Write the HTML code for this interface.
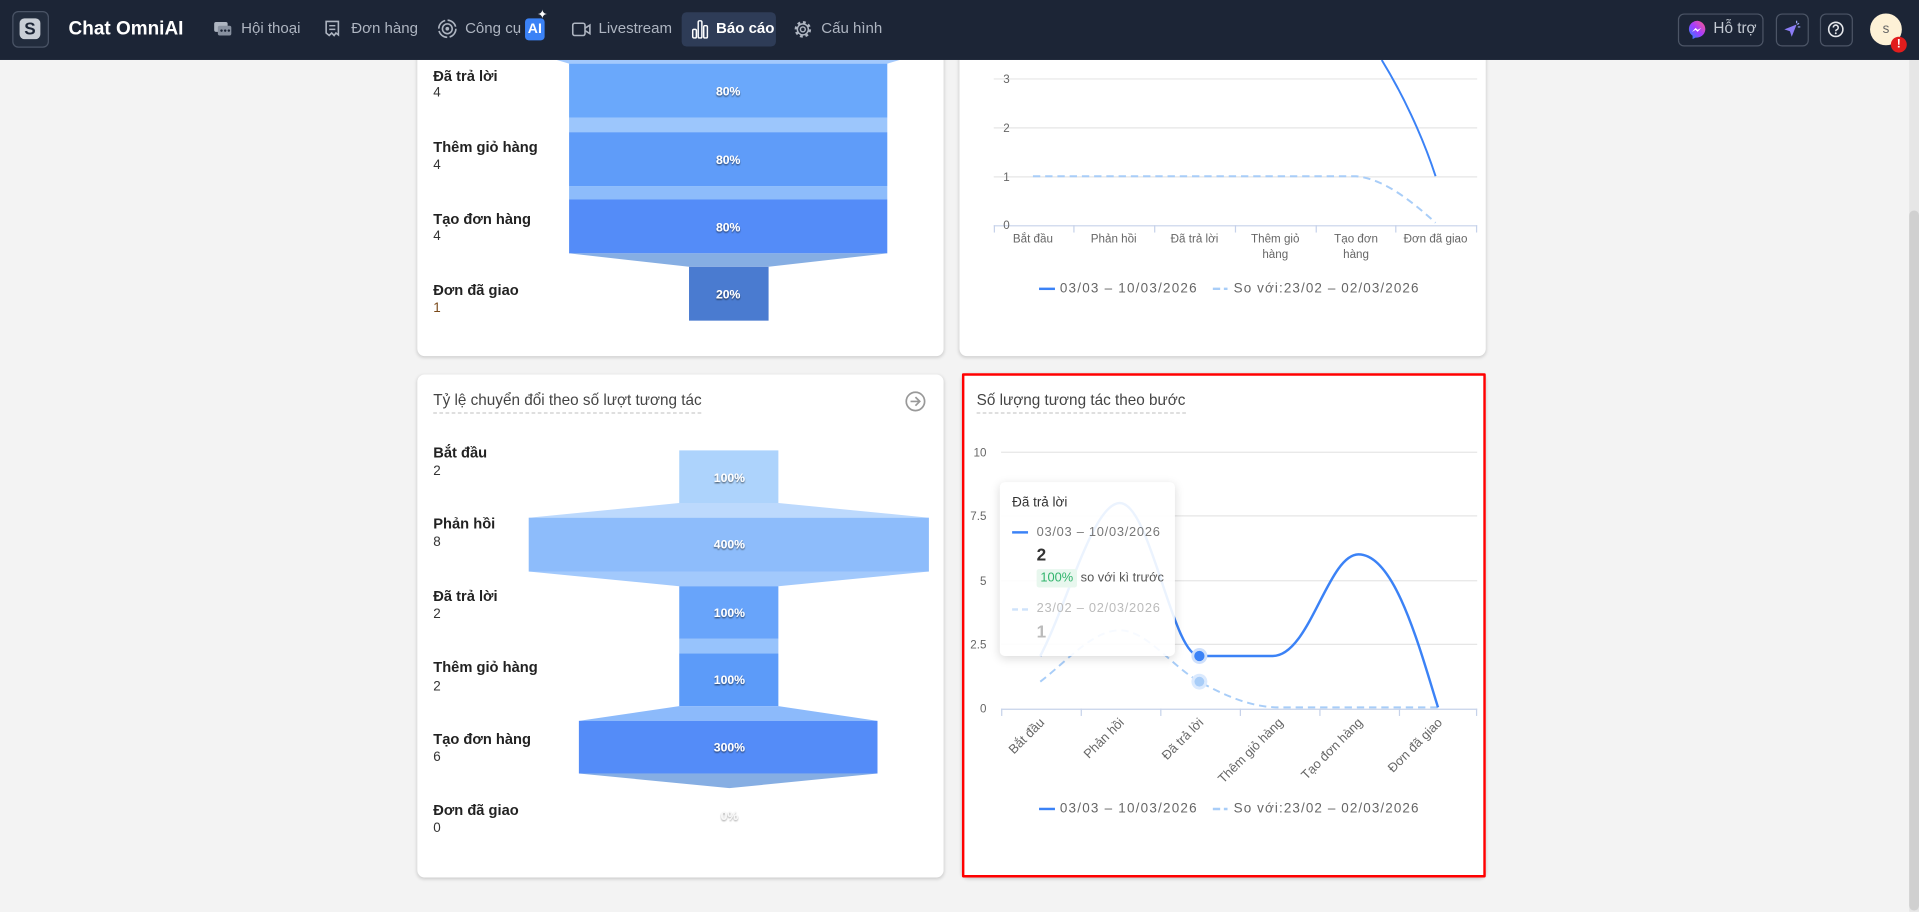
<!DOCTYPE html>
<html><head><meta charset="utf-8">
<style>
html,body{margin:0;padding:0;width:1919px;height:911px;overflow:hidden;background:#f3f3f3;}
#w{position:absolute;left:0;top:0;width:1568px;height:745px;transform:scale(1.22385);transform-origin:0 0;font-family:"Liberation Sans","DejaVu Sans",sans-serif;}
.hdr{position:absolute;left:0;top:0;width:1568px;height:49px;background:#1c2536;z-index:10;}
.nav{position:absolute;top:16px;font-size:12.3px;color:#aeb5c1;white-space:nowrap;}
.card{position:absolute;background:#fff;border-radius:6px;box-shadow:0 1px 3px rgba(0,0,0,.18);}
.lbl{position:absolute;font-size:12px;color:#222;font-weight:bold;}
.num{position:absolute;font-size:11px;color:#333;}
.ttl{position:absolute;font-size:12.5px;color:#444;border-bottom:1px dashed #ccc;padding-bottom:3px;}
</style></head><body>
<div id="w">
<div class="hdr">
  <div style="position:absolute;left:10px;top:9px;width:28px;height:28px;border:1px solid #4a5466;border-radius:5px;background:#222c3d;"></div>
  <div style="position:absolute;left:16px;top:15px;width:17px;height:17px;border-radius:4px;background:#c9ced6;color:#1c2536;font:bold 14px 'Liberation Sans';text-align:center;line-height:17px;">S</div>
  <div style="position:absolute;left:56px;top:15px;font-size:15.5px;font-weight:bold;color:#fff;">Chat OmniAI</div>
  <svg style="position:absolute;left:174px;top:17px" width="16" height="14" viewBox="0 0 16 14"><rect x="1" y="1" width="11" height="8" rx="1.5" fill="#aeb5c1"/><rect x="4" y="4" width="11" height="8" rx="1.5" fill="#8891a0"/><circle cx="7" cy="8" r="1" fill="#1c2536"/><circle cx="10" cy="8" r="1" fill="#1c2536"/><circle cx="13" cy="8" r="1" fill="#1c2536"/></svg>
  <div class="nav" style="left:197px">Hội thoại</div>
  <svg style="position:absolute;left:265px;top:16px" width="13" height="16" viewBox="0 0 13 16"><path d="M1.5 1.5h10v11l-2-1.5-1.5 2-2-2-2 2-2.5-2z" fill="none" stroke="#aeb5c1" stroke-width="1.3"/><path d="M4 5h5M4 8h5" stroke="#aeb5c1" stroke-width="1.2"/></svg>
  <div class="nav" style="left:287px">Đơn hàng</div>
  <svg style="position:absolute;left:357px;top:15px" width="17" height="17" viewBox="0 0 17 17"><circle cx="8.5" cy="8.5" r="7" fill="none" stroke="#aeb5c1" stroke-width="1.3" stroke-dasharray="9 2"/><circle cx="8.5" cy="8.5" r="4" fill="none" stroke="#aeb5c1" stroke-width="1.3"/><circle cx="8.5" cy="8.5" r="1.5" fill="#aeb5c1"/></svg>
  <div class="nav" style="left:380px">Công cụ</div>
  <div style="position:absolute;left:429px;top:15px;width:16px;height:18px;border-radius:3px;background:#3b82f6;color:#fff;font-size:11.5px;font-weight:bold;text-align:center;line-height:18px;">AI</div>
  <div style="position:absolute;left:439px;top:7px;color:#fff;font-size:10px;">✦</div>
  <svg style="position:absolute;left:467px;top:18px" width="16" height="12" viewBox="0 0 16 12"><rect x="1" y="1" width="10" height="10" rx="1.5" fill="none" stroke="#aeb5c1" stroke-width="1.3"/><path d="M11 5l4-2.5v7L11 7" fill="none" stroke="#aeb5c1" stroke-width="1.3"/></svg>
  <div class="nav" style="left:489px">Livestream</div>
  <div style="position:absolute;left:557px;top:10px;width:77px;height:28px;border-radius:4px;background:#2e3c57;"></div>
  <svg style="position:absolute;left:565px;top:16px" width="14" height="16" viewBox="0 0 14 16"><rect x="1" y="8" width="3" height="7" rx="1" fill="none" stroke="#fff" stroke-width="1.2"/><rect x="5.5" y="1" width="3" height="14" rx="1" fill="none" stroke="#fff" stroke-width="1.2"/><rect x="10" y="5" width="3" height="10" rx="1" fill="none" stroke="#fff" stroke-width="1.2"/></svg>
  <div class="nav" style="left:585px;color:#fff;font-weight:bold;">Báo cáo</div>
  <svg style="position:absolute;left:648px;top:16px" width="16" height="16" viewBox="0 0 16 16"><circle cx="8" cy="8" r="5.5" fill="none" stroke="#aeb5c1" stroke-width="2.5" stroke-dasharray="2.2 2.1"/><circle cx="8" cy="8" r="4.5" fill="none" stroke="#aeb5c1" stroke-width="1.2"/><circle cx="8" cy="8" r="2" fill="none" stroke="#aeb5c1" stroke-width="1.2"/></svg>
  <div class="nav" style="left:671px">Cấu hình</div>

  <div style="position:absolute;left:1371px;top:11px;width:68px;height:25px;border:1px solid #4c5566;border-radius:5px;"></div>
  <svg style="position:absolute;left:1379px;top:16px" width="16" height="16" viewBox="0 0 16 16"><defs><linearGradient id="mg" x1="0" y1="1" x2="1" y2="0"><stop offset="0" stop-color="#1e88ff"/><stop offset=".5" stop-color="#a33bff"/><stop offset="1" stop-color="#ff5c87"/></linearGradient></defs><path d="M8 1a7 6.7 0 0 0-4 12.2V16l2.4-1.3A7 6.7 0 1 0 8 1z" fill="url(#mg)"/><path d="M3.5 10l3-3.2 1.6 1.6 3-1.6-3 3.2-1.6-1.6z" fill="#fff"/></svg>
  <div class="nav" style="left:1400px;top:16px;color:#c4cad3;font-size:12.5px">Hỗ trợ</div>
  <div style="position:absolute;left:1451px;top:11px;width:25px;height:25px;border:1px solid #4c5566;border-radius:5px;"></div>
  <svg style="position:absolute;left:1456px;top:16px" width="16" height="16" viewBox="0 0 16 16"><path d="M2 8l10-4-4 10-1.5-4.5z" fill="#8b7cf6"/><path d="M12 1v2M14 3l-1.5 1M15 6h-2" stroke="#9aa6f5" stroke-width="1"/></svg>
  <div style="position:absolute;left:1487px;top:11px;width:25px;height:25px;border:1px solid #4c5566;border-radius:5px;"></div>
  <svg style="position:absolute;left:1493px;top:17px" width="14" height="14" viewBox="0 0 14 14"><circle cx="7" cy="7" r="5.8" fill="none" stroke="#e5e7eb" stroke-width="1.3"/><path d="M5 5.5a2 2 0 1 1 2.6 1.9c-.5.2-.6.6-.6 1.1" fill="none" stroke="#e5e7eb" stroke-width="1.3"/><circle cx="7" cy="10.2" r=".8" fill="#e5e7eb"/></svg>
  <div style="position:absolute;left:1528px;top:11px;width:26px;height:26px;border-radius:50%;background:#fdf1d6;color:#666;font-size:11px;text-align:center;line-height:26px;">s</div>
  <div style="position:absolute;left:1545px;top:30px;width:13px;height:13px;border-radius:50%;background:#e11d1d;color:#fff;font-size:10px;font-weight:bold;text-align:center;line-height:13px;">!</div>
</div>

<div style="position:absolute;left:1560px;top:49px;width:8px;height:696px;background:#e6e6e6;"></div>
<div style="position:absolute;left:1560px;top:172px;width:8px;height:572px;background:#d0d0d0;border-radius:4px;"></div>

<div class="card" style="left:341px;top:30px;width:430px;height:261px;"></div>
<div class="card" style="left:784px;top:30px;width:430px;height:261px;"></div>
<div class="card" style="left:341px;top:306px;width:430px;height:411px;"></div>
<div class="card" style="left:786px;top:305px;width:428px;height:412px;"></div>
<div style="position:absolute;left:786px;top:305px;width:424px;height:408px;border:2px solid #f00;border-radius:1px;"></div>

<div class="lbl" style="left:354px;top:55px">Đã trả lời</div><div class="num" style="left:354px;top:70px">4</div>
<div class="lbl" style="left:354px;top:113px">Thêm giỏ hàng</div><div class="num" style="left:354px;top:129px">4</div>
<div class="lbl" style="left:354px;top:172px">Tạo đơn hàng</div><div class="num" style="left:354px;top:187px">4</div>
<div class="lbl" style="left:354px;top:230px">Đơn đã giao</div><div class="num" style="left:354px;top:246px;color:#7a4a1a">1</div>

<div class="ttl" style="left:354px;top:320px">Tỷ lệ chuyển đổi theo số lượt tương tác</div>
<svg style="position:absolute;left:739px;top:319px" width="18" height="18" viewBox="0 0 18 18"><circle cx="9" cy="9" r="7.5" fill="none" stroke="#999" stroke-width="1.4"/><path d="M5 9h7M9 5.5L12.5 9 9 12.5" fill="none" stroke="#999" stroke-width="1.4"/></svg>
<div class="lbl" style="left:354px;top:363px">Bắt đầu</div><div class="num" style="left:354px;top:379px">2</div>
<div class="lbl" style="left:354px;top:421px">Phản hồi</div><div class="num" style="left:354px;top:437px">8</div>
<div class="lbl" style="left:354px;top:480px">Đã trả lời</div><div class="num" style="left:354px;top:496px">2</div>
<div class="lbl" style="left:354px;top:538px">Thêm giỏ hàng</div><div class="num" style="left:354px;top:555px">2</div>
<div class="lbl" style="left:354px;top:597px">Tạo đơn hàng</div><div class="num" style="left:354px;top:613px">6</div>
<div class="lbl" style="left:354px;top:655px">Đơn đã giao</div><div class="num" style="left:354px;top:671px">0</div>

<div class="ttl" style="left:798px;top:320px">Số lượng tương tác theo bước</div>

<svg style="position:absolute;left:0;top:0" width="1568" height="745" viewBox="0 0 1568 745" font-family="Liberation Sans, DejaVu Sans, sans-serif">
 <defs><filter id="ts"><feDropShadow dx="0" dy="1" stdDeviation=".6" flood-color="#000" flood-opacity=".6"/></filter></defs>
 <polygon points="455,49 735,49 725,52 465,52" fill="#a3c9fc"/>
 <rect x="465" y="52" width="260" height="44" fill="#6aa8fb"/>
 <rect x="465" y="96" width="260" height="12" fill="#9cc6fc"/>
 <rect x="465" y="108" width="260" height="44" fill="#5f9cf9"/>
 <rect x="465" y="152" width="260" height="11" fill="#8dbcfb"/>
 <rect x="465" y="163" width="260" height="44" fill="#548cf8"/>
 <polygon points="465,207 725,207 628,218 563,218" fill="#86aee3"/>
 <rect x="563" y="218" width="65" height="44" fill="#4a7bd0"/>
 <g fill="#fff" font-size="10" font-weight="bold" text-anchor="middle" filter="url(#ts)">
  <text x="595" y="78">80%</text><text x="595" y="134">80%</text><text x="595" y="189">80%</text><text x="595" y="244">20%</text>
 </g>
 <g stroke="#e6e6e6" stroke-width="1"><line x1="812" y1="64.5" x2="1207" y2="64.5"/><line x1="812" y1="104.5" x2="1207" y2="104.5"/><line x1="812" y1="144.5" x2="1207" y2="144.5"/></g>
 <line x1="812" y1="184.5" x2="1207" y2="184.5" stroke="#c6d2ea"/>
 <g stroke="#c6d2ea"><line x1="812.5" y1="184" x2="812.5" y2="190"/><line x1="877.5" y1="184" x2="877.5" y2="190"/><line x1="943.5" y1="184" x2="943.5" y2="190"/><line x1="1009.5" y1="184" x2="1009.5" y2="190"/><line x1="1075.5" y1="184" x2="1075.5" y2="190"/><line x1="1140.5" y1="184" x2="1140.5" y2="190"/><line x1="1206.5" y1="184" x2="1206.5" y2="190"/></g>
 <g fill="#666" font-size="9.5" text-anchor="end"><text x="825" y="68">3</text><text x="825" y="108">2</text><text x="825" y="148">1</text><text x="825" y="187">0</text></g>
 <g fill="#666" font-size="9.5" text-anchor="middle"><text x="844" y="198">Bắt đầu</text><text x="910" y="198">Phản hồi</text><text x="976" y="198">Đã trả lời</text><text x="1042" y="198">Thêm giỏ</text><text x="1042" y="211">hàng</text><text x="1108" y="198">Tạo đơn</text><text x="1108" y="211">hàng</text><text x="1173" y="198">Đơn đã giao</text></g>
 <path d="M1129,49 C1145,75 1162,110 1173,144" fill="none" stroke="#3b82f6" stroke-width="1.6"/>
 <path d="M844,144 L1108,144 C1130,146 1152,163 1173,182" fill="none" stroke="#a8cdf8" stroke-width="1.6" stroke-dasharray="6 4"/>
 <line x1="849" y1="236" x2="862" y2="236" stroke="#3b82f6" stroke-width="2"/>
 <text x="866" y="239" fill="#666" font-size="11" letter-spacing="1">03/03 – 10/03/2026</text>
 <line x1="991" y1="236" x2="1003" y2="236" stroke="#a8cdf8" stroke-width="2" stroke-dasharray="6 3"/>
 <text x="1008" y="239" fill="#666" font-size="11" letter-spacing=".9">So với:23/02 – 02/03/2026</text>

 <rect x="555" y="368" width="81" height="43" fill="#add3fc"/>
 <polygon points="555,411 636,411 759,423 432,423" fill="#bcd9fd"/>
 <rect x="432" y="423" width="327" height="44" fill="#8dbcfb"/>
 <polygon points="432,467 759,467 636,479 555,479" fill="#a2c9fc"/>
 <rect x="555" y="479" width="81" height="43" fill="#68a4fa"/>
 <rect x="555" y="522" width="81" height="12" fill="#97c3fc"/>
 <rect x="555" y="534" width="81" height="43" fill="#5c9bf9"/>
 <polygon points="555,577 636,577 717,589 473,589" fill="#8cbafb"/>
 <rect x="473" y="589" width="244" height="43" fill="#548cf8"/>
 <polygon points="473,632 717,632 596,644" fill="#86aee3"/>
 <g fill="#fff" font-size="10" font-weight="bold" text-anchor="middle" filter="url(#ts)">
  <text x="596" y="394">100%</text><text x="596" y="448">400%</text><text x="596" y="504">100%</text><text x="596" y="559">100%</text><text x="596" y="614">300%</text>
 </g>
 <text x="596" y="670" fill="#f4f4f4" font-size="10" font-weight="bold" text-anchor="middle" filter="url(#ts)" opacity=".6">0%</text>

 <g stroke="#e6e6e6"><line x1="818" y1="369.5" x2="1207" y2="369.5"/><line x1="818" y1="421.5" x2="1207" y2="421.5"/><line x1="818" y1="474.5" x2="1207" y2="474.5"/><line x1="818" y1="526.5" x2="1207" y2="526.5"/></g>
 <line x1="818" y1="579.5" x2="1207" y2="579.5" stroke="#c6d2ea"/>
 <g stroke="#c6d2ea"><line x1="818.5" y1="579" x2="818.5" y2="585"/><line x1="883.5" y1="579" x2="883.5" y2="585"/><line x1="948.5" y1="579" x2="948.5" y2="585"/><line x1="1013.5" y1="579" x2="1013.5" y2="585"/><line x1="1078.5" y1="579" x2="1078.5" y2="585"/><line x1="1143.5" y1="579" x2="1143.5" y2="585"/><line x1="1206.5" y1="579" x2="1206.5" y2="585"/></g>
 <g fill="#666" font-size="9.5" text-anchor="end"><text x="806" y="373">10</text><text x="806" y="425">7.5</text><text x="806" y="478">5</text><text x="806" y="530">2.5</text><text x="806" y="582">0</text></g>
 <g fill="#666" font-size="10.5" text-anchor="end">
  <text transform="translate(854,591) rotate(-45)">Bắt đầu</text>
  <text transform="translate(919,591) rotate(-45)">Phản hồi</text>
  <text transform="translate(984,591) rotate(-45)">Đã trả lời</text>
  <text transform="translate(1049,591) rotate(-45)">Thêm giỏ hàng</text>
  <text transform="translate(1114,591) rotate(-45)">Tạo đơn hàng</text>
  <text transform="translate(1179,591) rotate(-45)">Đơn đã giao</text>
 </g>
 <path d="M850,557 C872,540 893,515 915,515 C937,515 958,545 980,557 C1002,569 1023,578 1045,578 L1175,578" fill="none" stroke="#a8cdf8" stroke-width="1.6" stroke-dasharray="6 4"/>
 <path d="M850,536 C872,494 893,411 915,411 C940,411 958,536 980,536 L1040,536 C1070,536 1085,453 1110,453 C1140,453 1160,530 1175,578" fill="none" stroke="#3b82f6" stroke-width="2"/>
 <circle cx="980" cy="557" r="6.5" fill="#dbeafe"/><circle cx="980" cy="557" r="4" fill="#a8cdf8"/>
 <circle cx="980" cy="536" r="6.5" fill="#cfe0fb"/><circle cx="980" cy="536" r="4.2" fill="#3b82f6"/>
 <line x1="849" y1="661" x2="862" y2="661" stroke="#3b82f6" stroke-width="2"/>
 <text x="866" y="664" fill="#666" font-size="11" letter-spacing="1">03/03 – 10/03/2026</text>
 <line x1="991" y1="661" x2="1003" y2="661" stroke="#a8cdf8" stroke-width="2" stroke-dasharray="6 3"/>
 <text x="1008" y="664" fill="#666" font-size="11" letter-spacing=".9">So với:23/02 – 02/03/2026</text>
</svg>

<div style="position:absolute;left:817px;top:394px;width:143px;height:142px;background:rgba(255,255,255,.9);border-radius:4px;box-shadow:0 2px 8px rgba(0,0,0,.15);">
 <div style="position:absolute;left:10px;top:11px;font-size:11px;color:#333">Đã trả lời</div>
 <div style="position:absolute;left:10px;top:40px;width:13px;height:2px;background:#3b82f6"></div>
 <div style="position:absolute;left:30px;top:35px;font-size:10.5px;color:#777;letter-spacing:.6px">03/03 – 10/03/2026</div>
 <div style="position:absolute;left:30px;top:51px;font-size:14px;font-weight:bold;color:#333">2</div>
 <div style="position:absolute;left:30px;top:71px;width:33px;height:15px;background:#e8f7ee;border-radius:2px;font-size:10.5px;color:#31b46c;text-align:center;line-height:15px">100%</div>
 <div style="position:absolute;left:66px;top:72px;font-size:10.5px;color:#555">so với kì trước</div>
 <div style="position:absolute;left:10px;top:103px;width:13px;height:2px;background:repeating-linear-gradient(90deg,#cfe3fb 0 5px,transparent 5px 8px)"></div>
 <div style="position:absolute;left:30px;top:97px;font-size:10.5px;color:#bbb;letter-spacing:.6px">23/02 – 02/03/2026</div>
 <div style="position:absolute;left:30px;top:114px;font-size:14px;font-weight:bold;color:#bbb">1</div>
</div>
</div>
</body></html>
